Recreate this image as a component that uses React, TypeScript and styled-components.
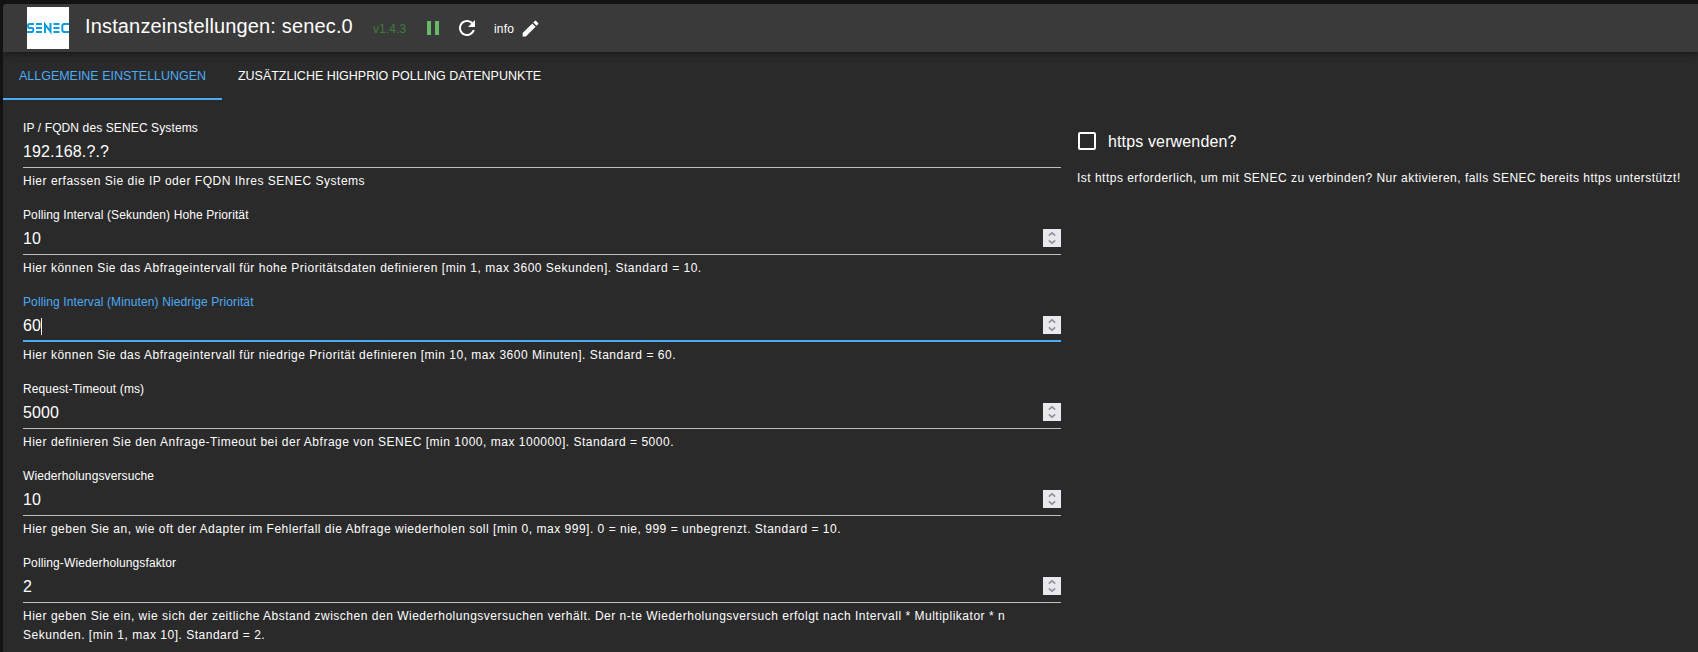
import React from "react";
import styled, { createGlobalStyle } from "styled-components";

const GlobalStyle = createGlobalStyle`
  * { box-sizing: border-box; }
  html, body { margin: 0; background: #121212; overflow: hidden; }
  body { font-family: "Liberation Sans", Arial, sans-serif; color: #fff; }
`;

const Page = styled.div`
  height: 652px;
  padding: 4px 0 0 3px;
  background: #121212;
  overflow: hidden;
`;
const Paper = styled.div`
  height: 648px;
  display: flex;
  flex-direction: column;
  background: #2a2a2a;
  border-top-left-radius: 4px;
  overflow: hidden;
`;
const Header = styled.header`
  flex: none;
  height: 48px;
  padding-left: 24px;
  display: flex;
  align-items: center;
  background: #3a3a3a;
  box-shadow: 0 2px 4px -1px rgba(0, 0, 0, 0.2), 0 4px 5px rgba(0, 0, 0, 0.14), 0 1px 10px rgba(0, 0, 0, 0.12);
`;
const Logo = styled.svg`
  flex: none;
  width: 42px;
  height: 42px;
  background: #fff;
`;
const Title = styled.h1`
  margin: -4px 0 0 16px;
  width: 288px;
  font-size: 20px;
  font-weight: 400;
  letter-spacing: 0.15px;
  line-height: 32px;
  white-space: nowrap;
`;
const Version = styled.span`
  width: 48px;
  padding-top: 2px;
  font-size: 12px;
  letter-spacing: 0.1px;
  line-height: 20px;
  color: #3b7f3e;
`;
const Info = styled.span`
  padding-top: 2px;
  margin-right: 6px;
  font-size: 12px;
  letter-spacing: 0.2px;
  line-height: 20px;
`;
const Icon = styled.svg<{ $size: number; $right?: number }>`
  flex: none;
  width: ${(p) => p.$size}px;
  height: ${(p) => p.$size}px;
  margin-right: ${(p) => p.$right ?? 0}px;
`;
const Tabs = styled.nav`
  flex: none;
  height: 48px;
  display: flex;
`;
const Tab = styled.button<{ $active?: boolean; $width: number }>`
  width: ${(p) => p.$width}px;
  padding: 2px 0 0 16px;
  border: 0;
  border-bottom: 2px solid ${(p) => (p.$active ? "#4dabf5" : "transparent")};
  background: none;
  color: ${(p) => (p.$active ? "#4dabf5" : "#fff")};
  font: 400 12.5px/44px "Liberation Sans", Arial, sans-serif;
  letter-spacing: -0.02px;
  text-align: left;
  text-transform: uppercase;
  white-space: nowrap;
`;
const Content = styled.main`
  display: grid;
  grid-template-columns: 1038px 1fr;
  column-gap: 16px;
  padding: 19px 0 0 20px;
`;
const Fields = styled.div`
  display: flex;
  flex-direction: column;
`;
const Field = styled.div`
  height: 87px;
`;
const Label = styled.label<{ $focused?: boolean }>`
  display: block;
  height: 18px;
  font-size: 12px;
  letter-spacing: 0.115px;
  line-height: 18px;
  color: ${(p) => (p.$focused ? "#4dabf5" : "#fff")};
`;
const InputRow = styled.div<{ $focused?: boolean }>`
  height: 31px;
  padding-bottom: ${(p) => (p.$focused ? 1 : 2)}px;
  display: flex;
  align-items: center;
  justify-content: space-between;
  border-bottom: ${(p) => (p.$focused ? "2px solid #4dabf5" : "1px solid #bfbfbf")};
`;
const Value = styled.span`
  display: flex;
  align-items: center;
  padding-top: 2px;
  font-size: 16px;
  letter-spacing: 0.14px;
  line-height: 24px;
`;
const Caret = styled.i`
  width: 1px;
  height: 17px;
  background: #fff;
`;
const Helper = styled.p`
  margin: 4px 0 0;
  font-size: 12px;
  letter-spacing: 0.51px;
  line-height: 19px;
`;
const Side = styled.div`
  padding-top: 10px;
`;
const CheckRow = styled.label`
  display: flex;
  align-items: center;
  gap: 12px;
  height: 24px;
  font-size: 16px;
  letter-spacing: 0.14px;
`;
const CheckText = styled.span`
  padding-top: 2px;
`;
const Box = styled.span`
  width: 18px;
  height: 18px;
  margin-left: 1px;
  border: 2px solid #fff;
  border-radius: 2px;
`;
const SideHelper = styled(Helper)`
  margin-top: 16px;
  letter-spacing: 0.484px;
  white-space: nowrap;
`;

const Spinner = () => (
  <Icon $size={18} viewBox="0 0 18 18">
    <rect width="18" height="18" fill="#e9e9ed" />
    <path d="M5.8 6.6 9 3.8l3.2 2.8M5.8 11.4 9 14.2l3.2-2.8" fill="none" stroke="#8f8f9d" strokeWidth="1.6" />
  </Icon>
);

type FieldData = { label: string; value: string; help: string; number?: boolean; focused?: boolean };

const fields: FieldData[] = [
  { label: "IP / FQDN des SENEC Systems", value: "192.168.?.?", help: "Hier erfassen Sie die IP oder FQDN Ihres SENEC Systems" },
  { label: "Polling Interval (Sekunden) Hohe Priorität", value: "10", number: true, help: "Hier können Sie das Abfrageintervall für hohe Prioritätsdaten definieren [min 1, max 3600 Sekunden]. Standard = 10." },
  { label: "Polling Interval (Minuten) Niedrige Priorität", value: "60", number: true, focused: true, help: "Hier können Sie das Abfrageintervall für niedrige Priorität definieren [min 10, max 3600 Minuten]. Standard = 60." },
  { label: "Request-Timeout (ms)", value: "5000", number: true, help: "Hier definieren Sie den Anfrage-Timeout bei der Abfrage von SENEC [min 1000, max 100000]. Standard = 5000." },
  { label: "Wiederholungsversuche", value: "10", number: true, help: "Hier geben Sie an, wie oft der Adapter im Fehlerfall die Abfrage wiederholen soll [min 0, max 999]. 0 = nie, 999 = unbegrenzt. Standard = 10." },
  { label: "Polling-Wiederholungsfaktor", value: "2", number: true, help: "Hier geben Sie ein, wie sich der zeitliche Abstand zwischen den Wiederholungsversuchen verhält. Der n-te Wiederholungsversuch erfolgt nach Intervall * Multiplikator * n Sekunden. [min 1, max 10]. Standard = 2." },
];

export default function App() {
  return (
    <Page>
      <GlobalStyle />
      <Paper>
        <Header>
          <Logo viewBox="0 0 42 42" fill="none" stroke="#0a9be0" strokeWidth="2">
            <path d="M7 17H2.5Q1 17 1 19T2.5 21H5Q6.3 21 6.3 23T5 25H0M9 17H15M9 21H15M9 25H15M18 26V17.5L23.5 24.5V16M26.5 17H32.5M26.5 21H32.5M26.5 25H32.5M42 17H37.5Q35.3 17 35.3 19V23Q35.3 25 37.5 25H42" />
          </Logo>
          <Title>Instanzeinstellungen: senec.0</Title>
          <Version>v1.4.3</Version>
          <Icon $size={24} $right={10} viewBox="0 0 24 24" fill="#66bb6a"><path d="M6 19h4V5H6v14zm8-14v14h4V5h-4z" /></Icon>
          <Icon $size={24} $right={15} viewBox="0 0 24 24" fill="#fff"><path d="M17.65 6.35C16.2 4.9 14.21 4 12 4c-4.42 0-7.99 3.58-7.99 8s3.57 8 7.99 8c3.73 0 6.84-2.55 7.73-6h-2.08c-.82 2.33-3.04 4-5.65 4-3.31 0-6-2.69-6-6s2.69-6 6-6c1.66 0 3.14.69 4.22 1.78L13 11h7V4l-2.35 2.35z" /></Icon>
          <Info>info</Info>
          <Icon $size={21} viewBox="0 0 24 24" fill="#fff"><path d="M3 17.25V21h3.75L17.81 9.94l-3.75-3.75L3 17.25zM20.71 7.04c.39-.39.39-1.02 0-1.41l-2.34-2.34a.9959.9959 0 0 0-1.41 0l-1.83 1.83 3.75 3.75 1.83-1.83z" /></Icon>
        </Header>
        <Tabs>
          <Tab $active $width={219}>Allgemeine Einstellungen</Tab>
          <Tab $width={335}>Zusätzliche HighPrio Polling Datenpunkte</Tab>
        </Tabs>
        <Content>
          <Fields>
            {fields.map((f) => (
              <Field key={f.label}>
                <Label $focused={f.focused}>{f.label}</Label>
                <InputRow $focused={f.focused}>
                  <Value>{f.value}{f.focused && <Caret />}</Value>
                  {f.number && <Spinner />}
                </InputRow>
                <Helper>{f.help}</Helper>
              </Field>
            ))}
          </Fields>
          <Side>
            <CheckRow><Box /><CheckText>https verwenden?</CheckText></CheckRow>
            <SideHelper>Ist https erforderlich, um mit SENEC zu verbinden? Nur aktivieren, falls SENEC bereits https unterstützt!</SideHelper>
          </Side>
        </Content>
      </Paper>
    </Page>
  );
}
